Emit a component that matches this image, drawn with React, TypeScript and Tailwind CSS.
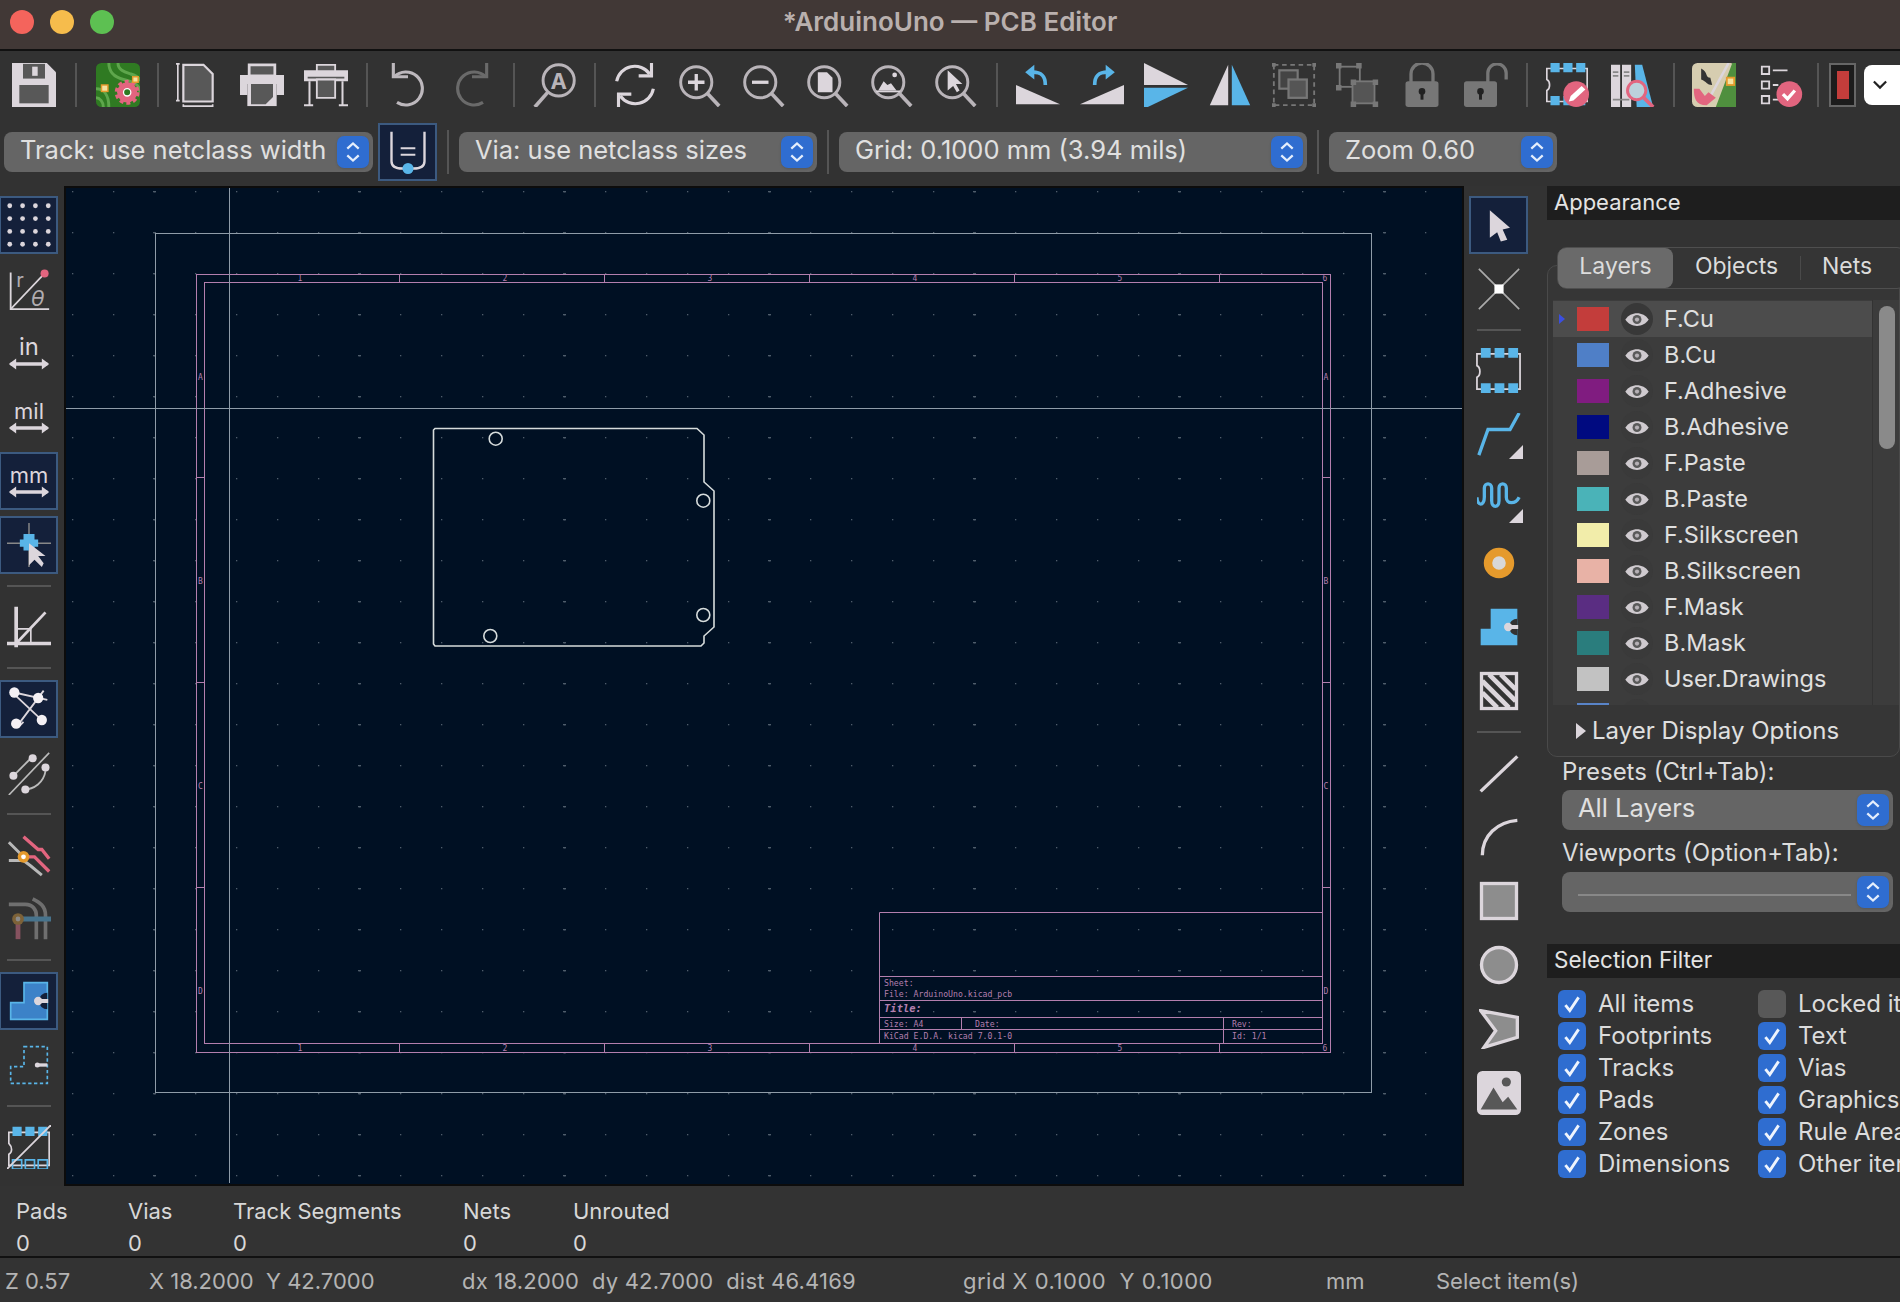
import type { ReactNode } from "react"

const LT = "#dcd6dc"
const MID = "#585858"
const BLUE = "#59b5e8"
const PINK = "#e2657f"
const ORANGE = "#e59a2c"
const SMALL = "w-[40px] h-[40px]"

const Ico = ({ children, size = "w-[44px] h-[44px]" }: { children: ReactNode; size?: string }) => (
  <svg viewBox="0 0 24 24" className={size} fill="none">{children}</svg>
)

const Glass = ({ children }: { children?: ReactNode }) => (
  <Ico>
    <circle cx="10.5" cy="10.5" r="8.5" stroke="#b9b4b9" strokeWidth="1.6" fill="#333" />
    <path d="M16.5 16.5 23 23.5" stroke="#b9b4b9" strokeWidth="2" />
    {children}
  </Ico>
)

const IconSave = () => (
  <Ico>
    <path d="M0 0h19l5 5v19H0z" fill={LT} />
    <rect x="6" y="0.5" width="12" height="8" fill={MID} />
    <rect x="11" y="2" width="3" height="5" fill={LT} />
    <rect x="4" y="12" width="16" height="10" fill={MID} />
  </Ico>
)
const IconPcb = () => (
  <Ico>
    <rect width="24" height="24" rx="3" fill="#2f7a22" />
    <path d="M7 0c0 6 4 8 8 9s9 2 9 7M12 0c0 4 4 5 7 6s5 2 5 4M0 14c4 0 7 3 7 10M0 19c2 0 4 2 4 5" stroke="#5ea64c" strokeWidth="1.6" />
    <circle cx="17" cy="16" r="5.5" fill={PINK} stroke={PINK} strokeWidth="2.6" strokeDasharray="2 1.5" />
    <circle cx="17" cy="16" r="5" fill={PINK} />
    <circle cx="17" cy="16" r="2" fill="#2f7a22" stroke="#fff" strokeWidth="0.7" />
    <rect x="3" y="12" width="3.5" height="3.5" fill="#f4e3a0" stroke={ORANGE} strokeWidth="0.8" />
    <rect x="20" y="7.5" width="3" height="3" fill="#f4e3a0" stroke={ORANGE} strokeWidth="0.8" />
  </Ico>
)
const IconPage = () => (
  <Ico>
    <path d="M4 1h11l5 5v15H4z" fill={MID} stroke={LT} strokeWidth="1.2" />
    <path d="M1 0.5v20M0 .5h2M0 20.5h2M4 23.5h16M4 22.5v2M20 22.5v2" stroke={LT} strokeWidth="0.9" />
  </Ico>
)
const IconPrint = () => (
  <Ico>
    <path d="M5 1h14v6H5z" fill={MID} stroke={LT} strokeWidth="1.5" />
    <path d="M0 6.500h24v11h-4v-6H4v6H0z" fill={LT} />
    <path d="M4 10h16v13.500H4z" fill={LT} />
    <path d="M6 11.500h12v7l-4 4H6z" fill={MID} />
  </Ico>
)
const IconPlot = () => (
  <Ico>
    <path d="M7 1h10v4H7z" fill={MID} stroke={LT} />
    <path d="M0 4h24v6H0z" fill={LT} />
    <path d="M2 8h20" stroke={MID} />
    <path d="M7 9h10v10H7z" fill={MID} stroke={LT} />
    <path d="M3 10v13M21 10v13M0 23h5M19 23h5" stroke={LT} strokeWidth="1.1" />
  </Ico>
)
const IconUndo = ({ flip, color }: { flip?: boolean; color: string }) => (
  <Ico>
    <g transform={flip ? "translate(24 0) scale(-1 1)" : undefined} stroke={color} strokeWidth="1.7">
      <path d="M4 0v7.500h8" />
      <path d="M4.500 7.500A9 9 0 1 1 6 21.500" />
    </g>
  </Ico>
)
const IconFind = () => (
  <Ico>
    <circle cx="14" cy="9.500" r="8.500" stroke="#b9b4b9" strokeWidth="1.6" />
    <path d="M8 16 1 24" stroke="#b9b4b9" strokeWidth="2" />
    <text x="14" y="14" textAnchor="middle" fontSize="12" fontWeight="700" fill="#b9b4b9" fontFamily="Inter, sans-serif">A</text>
  </Ico>
)
const IconRefresh = () => (
  <Ico>
    <g stroke={LT} strokeWidth="1.700">
      <path d="M2 10A10 10 0 0 1 20 6" />
      <path d="M22 14A10 10 0 0 1 4 18" />
      <path d="M21 0v7h-7M3 24v-7h7" />
    </g>
  </Ico>
)
const IconRotate = ({ flip }: { flip?: boolean }) => (
  <Ico>
    <g transform={flip ? "translate(24 0) scale(-1 1)" : undefined}>
      <path d="M0 12v10.500h24z" fill={LT} />
      <path d="M16 12C16 7 14 5 9 5" stroke={BLUE} strokeWidth="2" />
      <path d="M7 1v8l-5-4z" fill={BLUE} transform="translate(3 0)" />
    </g>
  </Ico>
)
const IconFlip = () => (
  <Ico>
    <path d="M0 0v12h24z" fill={LT} />
    <path d="M0 13.500h24L0 25z" fill={BLUE} />
  </Ico>
)
const IconMirror = () => (
  <Ico>
    <path d="M11 1v22H1z" fill={LT} />
    <path d="M13 1v22h10z" fill={BLUE} />
  </Ico>
)
const IconGroup = () => (
  <Ico>
    <rect x="1" y="1" width="22" height="22" stroke="#777" strokeDasharray="2.500 2" />
    <rect x="4" y="4" width="10" height="10" stroke="#777" strokeWidth="1.2" fill="#444" />
    <rect x="9" y="9" width="10" height="10" stroke="#777" strokeWidth="1.2" fill="#555" />
    <path d="M0 0h2v2H0zM22 0h2v2h-2zM0 22h2v2H0zM22 22h2v2h-2z" fill="#777" />
  </Ico>
)
const IconUngroup = () => (
  <Ico>
    <rect x="2" y="2" width="11" height="11" stroke="#777" />
    <rect x="9" y="10" width="12" height="12" stroke="#777" fill="#555" />
    <path d="M0 0h3v3H0zM11 0h3v3h-3zM0 12h3v3H0zM8 9h3v3H8zM20 9h3v3h-3zM8 21h3v3H8zM20 21h3v3h-3z" fill="#777" />
  </Ico>
)
const IconLock = ({ open }: { open?: boolean }) => (
  <Ico>
    {open ? (
      <path d="M13 11V5.500a5 5 0 0 1 10 0V9" stroke="#777" strokeWidth="1.800" />
    ) : (
      <path d="M6 11V6a6 6 0 0 1 12 0v5" stroke="#777" strokeWidth="1.800" />
    )}
    <g transform={open ? "translate(-2 0)" : undefined}>
      <rect x={open ? 2 : 2} y="10" width="18" height="14" rx="1.500" fill="#777" transform={open ? undefined : "translate(1 0)"} />
      <circle cx={open ? 11 : 12} cy="15.500" r="1.800" fill="#222" />
      <rect x={open ? 10.200 : 11.200} y="16" width="1.600" height="4" fill="#222" />
    </g>
  </Ico>
)
const FpShape = () => (
  <>
    <path d="M1 3h22v18H1v-6c2-1 2-5 0-6z" stroke={LT} strokeWidth="0.9" />
    <path d="M3 0h5v5H3zM10 0h5v5h-5zM17 0h5v5h-5zM3 18h5v5H3zM10 18h5v5h-5zM17 18h5v5h-5z" fill={BLUE} />
  </>
)
const IconFpEdit = () => (
  <Ico>
    <FpShape />
    <circle cx="17" cy="17" r="7" fill={PINK} />
    <path d="M13 21l1-3 6-5.500 2 2-6.500 6z" fill="#fff" />
  </Ico>
)
const IconLib = () => (
  <Ico>
    <path d="M0 1h5v23H0zM6 1h5v23H6z" fill={LT} />
    <path d="M13 1h4l6 23h-9z" fill={BLUE} />
    <path d="M1 5h3M1 7h3M7 5h3M7 7h3M1 20h9" stroke="#888" />
    <circle cx="14" cy="15" r="5" fill="#bcd2dc" stroke={PINK} strokeWidth="1.600" />
    <path d="M18 19l5 5" stroke={PINK} strokeWidth="2" />
  </Ico>
)
const IconScript = () => (
  <Ico>
    <rect width="24" height="24" rx="3" fill="#d6cdb0" />
    <path d="M13 24 22 0h2v24z" fill="#4f8f3e" />
    <path d="M20 0 9 20" stroke={LT} strokeWidth="1.400" />
    <path d="M5 3c4 2 2 5 5 5l1 4c-3 0-3-2-6-3z" fill="#333" />
    <rect x="19" y="8" width="4" height="4" fill="#f4e3a0" stroke={ORANGE} />
    <path d="M1 14c0 5 1 9 7 9l5-4-4-3-2 2-3-4z" fill={PINK} />
  </Ico>
)
const IconCheck = () => (
  <Ico>
    <path d="M1 2h4v4H1zM1 10h4v4H1zM1 18h4v4H1z" stroke={LT} strokeWidth="1" />
    <path d="M7 4h8M7 12h3M7 20h3" stroke={LT} strokeWidth="1" />
    <circle cx="16" cy="17" r="7" fill={PINK} />
    <path d="M12.500 17l2.500 2.500 4-4.500" stroke="#fff" strokeWidth="1.800" />
  </Ico>
)

const Sep = ({ w }: { w: string }) => (
  <div className={`${w} h-[44px] shrink-0 flex justify-center`}>
    <div className="w-[2px] h-full bg-[#555]" />
  </div>
)
const TI = ({ children, className = "" }: { children: ReactNode; className?: string }) => (
  <div className={`w-[64px] h-[44px] shrink-0 flex justify-center items-center ${className}`}>{children}</div>
)

const Stepper = () => (
  <div className="w-[32px] h-[32px] rounded-[7px] bg-[#2f6dd0] flex items-center justify-center shrink-0 shadow">
    <svg viewBox="0 0 14 20" className="w-[16px] h-[24px]" fill="none" stroke="#e4eefc" strokeWidth="2">
      <path d="M2 7l5-4.500L12 7M2 13l5 4.500L12 13" />
    </svg>
  </div>
)

const Combo = ({ label, w }: { label: string; w: string }) => (
  <div className={`${w} h-[40px] shrink-0 rounded-lg bg-[#656565] flex items-center justify-between pl-[16px] pr-[4px] text-[25.500px] text-[#e0e0e0] whitespace-nowrap`}>
    <span className="pb-[3px]">{label}</span>
    <Stepper />
  </div>
)

const Row2Sep = () => <div className="w-[2px] h-[44px] bg-[#555] shrink-0" />

const SideBtn = ({ children, active }: { children: ReactNode; active?: boolean }) => (
  <div className="h-[64px] flex items-center justify-center">
    <div className={`w-[59px] h-[58px] flex items-center justify-center ${active ? "bg-[#14203a] border-2 border-[#3c5a80]" : ""}`}>{children}</div>
  </div>
)
const SideSep = () => (
  <div className="h-[18px] flex items-center justify-center">
    <div className="w-[44px] h-[2px] bg-[#555]" />
  </div>
)

const DimIcon = ({ t, fs }: { t: string; fs: number }) => (
  <Ico>
    <text x="12" y="13" textAnchor="middle" fontSize={fs} fill={LT} fontFamily="Inter, sans-serif">{t}</text>
    <path d="M2 18h20" stroke={LT} strokeWidth="1.800" />
    <path d="M5 15 1 18l4 3zM19 15l4 3-4 3z" fill={LT} />
  </Ico>
)

const Triangle = () => (
  <svg viewBox="0 0 10 10" className="w-[14px] h-[14px] absolute right-[-2px] bottom-[-2px]">
    <path d="M10 0v10H0z" fill={LT} />
  </svg>
)

const ZoneShape = ({ fill, stroke, dash }: { fill: string; stroke: string; dash?: string }) => (
  <path d="M9 1h14v22H1V13h8z" fill={fill} stroke={stroke} strokeWidth="1" strokeDasharray={dash} />
)

const PinInZone = ({ bg }: { bg: string }) => (
  <>
    <path d="M23 7a5 5 0 0 0 0 10z" fill={bg} />
    <circle cx="17.500" cy="12" r="2.500" fill={LT} />
    <rect x="17.500" y="10.800" width="6" height="2.400" fill={LT} />
  </>
)

const LeftBar = () => (
  <div className="w-[64px] shrink-0 overflow-hidden">
    <div className="-ml-[2px] w-[61px] pt-[7px] flex flex-col items-stretch">
      <SideBtn active>
        <Ico>
          {[1.5, 8.5, 15.5, 22.5].flatMap((y) => [1.5, 8.5, 15.5, 22.5].map((x) => <circle key={`${x}-${y}`} cx={x} cy={y} r="1.300" fill={LT} />))}
        </Ico>
      </SideBtn>
      <SideBtn>
        <Ico>
          <path d="M2 3v20h21" stroke={LT} strokeWidth="1" />
          <path d="M2 23 20 4" stroke={LT} strokeWidth="0.900" />
          <circle cx="20.500" cy="3.500" r="2.200" fill={PINK} />
          <text x="5" y="11" fontSize="11" fill="#b0acb0" fontFamily="Inter, sans-serif">r</text>
          <text x="13" y="21" fontSize="12" fontStyle="italic" fill="#b0acb0" fontFamily="Inter, sans-serif">θ</text>
        </Ico>
      </SideBtn>
      <SideBtn><DimIcon t="in" fs={13} /></SideBtn>
      <SideBtn><DimIcon t="mil" fs={12} /></SideBtn>
      <SideBtn active><DimIcon t="mm" fs={12} /></SideBtn>
      <SideBtn active>
        <Ico>
          <path d="M12 0v24M0 11h24" stroke="#888" strokeWidth="0.800" />
          <path d="M9 6h6v3h2v4h-2v2H9v-2H7V9h2z" fill={BLUE} />
          <path d="M12 11v12l3-3 4 4 1-2-3-4h4z" fill={LT} />
        </Ico>
      </SideBtn>
      <SideSep />
      <SideBtn>
        <Ico>
          <path d="M5 1v22M0 21h24" stroke={LT} strokeWidth="2" />
          <path d="M5 21 21 4" stroke={LT} strokeWidth="1.500" />
          <path d="M5 13h8v8" stroke={LT} strokeWidth="0.900" />
        </Ico>
      </SideBtn>
      <SideSep />
      <SideBtn active>
        <Ico>
          <path d="M4 3 22 7M5 22 20 2M7 21l2-2M4 4l16 15" stroke={LT} strokeWidth="1" />
          <circle cx="4" cy="3" r="2.800" fill="#f4f0f4" />
          <circle cx="17" cy="6" r="2.800" fill="#f4f0f4" />
          <circle cx="5" cy="20" r="2.800" fill="#f4f0f4" />
          <circle cx="19" cy="18" r="2.800" fill="#f4f0f4" />
        </Ico>
      </SideBtn>
      <SideBtn>
        <Ico>
          <path d="M1 24 23 1" stroke="#bbb" strokeWidth="0.900" />
          <path d="M4 13 14 3" stroke="#bbb" strokeWidth="1" />
          <path d="M9 21c6 0 11-4 12-10" stroke="#bbb" strokeWidth="1" />
          <circle cx="14" cy="4" r="2.200" fill={LT} />
          <circle cx="3.500" cy="13.500" r="2.200" fill={LT} />
          <circle cx="21" cy="9" r="2.200" fill={LT} />
          <circle cx="10" cy="21" r="2.200" fill={LT} />
        </Ico>
      </SideBtn>
      <SideSep />
      <SideBtn>
        <Ico>
          <path d="M9 2 17 9h2l4 5" stroke={PINK} strokeWidth="1.800" />
          <path d="M12 13h3l8 8" stroke={PINK} strokeWidth="1.800" />
          <path d="M1 5l7 7M1 15h8l4 3 6 5" stroke="#b8b8b8" strokeWidth="1.600" />
          <circle cx="9" cy="13" r="3.200" fill={ORANGE} />
          <circle cx="9" cy="13" r="1.300" fill="#fff" />
        </Ico>
      </SideBtn>
      <SideBtn>
        <Ico>
          <path d="M1 4h9c4 0 6 3 6 6v13M14 1c4 2 7 4 7 9v13" stroke="#6f6f6f" strokeWidth="2" />
          <path d="M6 12h18" stroke="#47738c" strokeWidth="2.600" />
          <path d="M6 12v11" stroke="#86525f" strokeWidth="2.600" />
          <circle cx="6" cy="12" r="3.200" fill="#7d6238" />
          <circle cx="6" cy="12" r="1.300" fill="#8c8c8c" />
        </Ico>
      </SideBtn>
      <SideSep />
      <SideBtn active>
        <Ico size={SMALL}>
          <ZoneShape fill="#3c82c8" stroke={BLUE} />
          <PinInZone bg="#14203a" />
        </Ico>
      </SideBtn>
      <SideBtn>
        <Ico size={SMALL}>
          <ZoneShape fill="none" stroke={BLUE} dash="2 1.500" />
          <circle cx="17" cy="12" r="1.500" fill={LT} />
          <rect x="17" y="11" width="6" height="2" fill={LT} />
        </Ico>
      </SideBtn>
      <SideSep />
      <SideBtn>
        <Ico>
          <path d="M1 4h22v18H1v-6c2-1 2-4 0-6z" stroke={LT} strokeWidth="0.900" />
          <path d="M3 1h5v5H3zM10 1h5v5h-5zM17 1h5v5h-5z" fill={BLUE} />
          <path d="M3 19h5v5H3zM10 19h5v5h-5zM17 19h5v5h-5z" stroke={BLUE} strokeWidth="0.900" />
          <path d="M0 24 24 0" stroke={LT} strokeWidth="1" />
        </Ico>
      </SideBtn>
    </div>
  </div>
)

const RightBar = () => (
  <div className="w-[83px] shrink-0 pt-[8px] pl-[5px] flex flex-col items-start bg-[#333]">
    <div className="-mt-[1px]">
      <SideBtn active>
        <Ico><path d="M7 4 18 13.500 14 14.500 16.500 20 13 21 11 16 7 19z" fill={LT} /></Ico>
      </SideBtn>
    </div>
    <div className="w-[59px]">
      <SideBtn>
        <Ico>
          <path d="M1 1 23 23M23 1 1 23" stroke="#aaa" strokeWidth="0.900" />
          <rect x="9.500" y="9.500" width="5" height="5" fill="#fff" />
        </Ico>
      </SideBtn>
      <SideSep />
      <SideBtn><Ico size="w-[47px] h-[47px]"><FpShape /></Ico></SideBtn>
      <SideBtn>
        <div className="relative">
          <Ico><path d="M1 23 6 9h12l5-9" stroke={BLUE} strokeWidth="1.800" /></Ico>
          <Triangle />
        </div>
      </SideBtn>
      <SideBtn>
        <div className="relative">
          <Ico><path d="M0 11c0 5 4 5 4 0V6c0-3 4-3 4 0v7c0 4 4 4 4 0V6c0-3 4-3 4 0v5c0 4 5 4 7 0" stroke={BLUE} strokeWidth="1.800" /></Ico>
          <Triangle />
        </div>
      </SideBtn>
      <SideBtn>
        <Ico>
          <circle cx="12" cy="12" r="6" fill="#d8d8d8" stroke={ORANGE} strokeWidth="4.600" />
        </Ico>
      </SideBtn>
      <SideBtn>
        <Ico size={SMALL}>
          <path d="M7 1h16v22H1V13h6z" fill={BLUE} />
          <PinInZone bg="#333" />
        </Ico>
      </SideBtn>
      <SideBtn>
        <Ico size={SMALL}>
          <rect x="1.500" y="1.500" width="21" height="21" stroke={LT} strokeWidth="2" />
          <path d="M2 6 18 22M2 13l9 9M6 2l16 16M13 2l9 9" stroke={LT} strokeWidth="2.800" />
        </Ico>
      </SideBtn>
      <SideSep />
      <SideBtn><Ico size={SMALL}><path d="M1 23 23 2" stroke={LT} strokeWidth="2" /></Ico></SideBtn>
      <SideBtn><Ico size={SMALL}><path d="M2 23C2 11 11 3 23 2" stroke={LT} strokeWidth="2" /></Ico></SideBtn>
      <SideBtn><Ico size={SMALL}><rect x="1.500" y="1.500" width="21" height="21" fill="#8d8d8d" stroke={LT} strokeWidth="2" /></Ico></SideBtn>
      <SideBtn><Ico size={SMALL}><circle cx="12" cy="12" r="10.500" fill="#8d8d8d" stroke={LT} strokeWidth="2" /></Ico></SideBtn>
      <SideBtn><Ico size={SMALL}><path d="M1 1 23 5v12L3 23l7-10z" fill="#8d8d8d" stroke={LT} strokeWidth="2" /></Ico></SideBtn>
      <SideBtn>
        <Ico>
          <rect width="24" height="24" rx="3" fill={LT} />
          <circle cx="16" cy="6" r="2.500" fill={MID} />
          <path d="M2 21 9 9l5 8 3-3 5 7z" fill={MID} />
        </Ico>
      </SideBtn>
    </div>
  </div>
)

const Eye = ({ dark }: { dark?: boolean }) => (
  <div className={`w-[32px] h-[32px] rounded-full flex items-center justify-center shrink-0 ${dark ? "bg-[#383838]" : "bg-[#3a3a3a]"}`}>
    <svg viewBox="0 0 24 16" className="w-[26px] h-[17px]" fill="none">
      <path d="M1 8c5-8 17-8 22 0-5 8-17 8-22 0z" fill="#d0cbd0" />
      <circle cx="12" cy="8" r="4.200" fill="#5a5a5a" />
      <circle cx="12" cy="8" r="2" fill="#b5b0b5" />
    </svg>
  </div>
)

const layers = [
  ["F.Cu", "bg-[#c33d3b]"],
  ["B.Cu", "bg-[#4f7fc7]"],
  ["F.Adhesive", "bg-[#801c80]"],
  ["B.Adhesive", "bg-[#000a80]"],
  ["F.Paste", "bg-[#a89c98]"],
  ["B.Paste", "bg-[#4ab3b8]"],
  ["F.Silkscreen", "bg-[#f2edaa]"],
  ["B.Silkscreen", "bg-[#e8b2a6]"],
  ["F.Mask", "bg-[#5a2d82]"],
  ["B.Mask", "bg-[#2a7d7d]"],
  ["User.Drawings", "bg-[#c2c2c2]"],
  ["", "bg-[#5984c8]"],
]

const Check = ({ on = true }: { on?: boolean }) => (
  <div className={`w-[28px] h-[28px] rounded-[6px] flex items-center justify-center shrink-0 ${on ? "bg-[#2f6dd0]" : "bg-[#585858]"}`}>
    {on && (
      <svg viewBox="0 0 20 20" className="w-[22px] h-[22px]" fill="none" stroke="#eef4fd" strokeWidth="2.600">
        <path d="M4 11l4 5 8-12" />
      </svg>
    )}
  </div>
)

const filters: [string, boolean][] = [
  ["All items", true], ["Locked items", false],
  ["Footprints", true], ["Text", true],
  ["Tracks", true], ["Vias", true],
  ["Pads", true], ["Graphics", true],
  ["Zones", true], ["Rule Areas", true],
  ["Dimensions", true], ["Other items", true],
]

const Appearance = () => (
  <div className="flex-1 min-w-0 overflow-hidden flex flex-col bg-[#333]">
    <div className="h-[34px] shrink-0 bg-[#1e1e1e] pl-[7px] pb-[2px] flex items-center text-[22px] text-[#e4e4e4]">Appearance</div>
    <div className="relative z-10 mt-[27px] ml-[10px] h-[42px] w-[350px] shrink-0 rounded-[10px] border border-[#4f4f4f] bg-[#353535] flex items-center text-[23px] text-[#dcdcdc]">
      <div className="w-[115px] h-[40px] pb-[3px] rounded-lg bg-[#6a6a6a] flex items-center justify-center">Layers</div>
      <div className="w-[127px] pb-[3px] text-center">Objects</div>
      <div className="w-[1px] h-[24px] bg-[#4a4a4a]" />
      <div className="w-[92px] pb-[3px] text-center">Nets</div>
    </div>
    <div className="-mt-[24px] h-[492px] shrink-0 rounded-[10px] border border-[#4a4a4a] pt-[34px] pl-[5px] flex flex-col bg-[#363636]">
      <div className="h-[405px] shrink-0 flex overflow-hidden bg-[#3c3c3c]">
        <div className="w-[319px] shrink-0 pt-[1px]">
          {layers.map(([name, color], i) => (
            <div key={color} className={`h-[36px] flex items-center relative pl-[24px] ${i === 0 ? "bg-[#4c4c4c]" : ""}`}>
              {i === 0 && (
                <svg viewBox="0 0 6 10" className="w-[6px] h-[10px] absolute left-[6px] top-[13px]"><path d="M0 0l6 5-6 5z" fill="#3b4fe0" /></svg>
              )}
              <div className={`w-[32px] h-[24px] shrink-0 ${color}`} />
              <div className="ml-[12px]"><Eye dark={i === 0} /></div>
              <span className="ml-[11px] text-[23.500px] text-[#e0e0e0] whitespace-nowrap">{name}</span>
            </div>
          ))}
        </div>
        <div className="flex-1 border-l border-[#333] pl-[6px] pt-[6px]">
          <div className="w-[16px] h-[143px] rounded-full bg-[#8a8a8a]" />
        </div>
      </div>
      <div className="flex-1 flex items-center pl-[23px] text-[24px] text-[#e0e0e0]">
        <svg viewBox="0 0 10 16" className="w-[10px] h-[18px] mr-[6px]"><path d="M0 0l10 8-10 8z" fill={LT} /></svg>
        Layer Display Options
      </div>
    </div>
    <div className="pl-[15px] pr-[7px] shrink-0">
      <div className="h-[30px] flex items-center text-[24px] text-[#dcdcdc]">Presets (Ctrl+Tab):</div>
      <div className="mt-[3px] h-[40px] rounded-lg bg-[#656565] flex items-center justify-between pl-[16px] pr-[4px] text-[25.500px] text-[#e0e0e0]">
        <span className="pb-[3px]">All Layers</span>
        <Stepper />
      </div>
      <div className="h-[42px] pt-[3px] flex items-center text-[24px] text-[#dcdcdc]">Viewports (Option+Tab):</div>
      <div className="h-[40px] rounded-lg bg-[#656565] flex items-center justify-between pl-[16px] pr-[4px]">
        <div className="flex-1 h-[2px] bg-[#888] mr-[6px] mt-[6px]" />
        <Stepper />
      </div>
    </div>
    <div className="mt-[32px] h-[34px] shrink-0 bg-[#1e1e1e] pl-[7px] pb-[2px] flex items-center text-[22.500px] text-[#e4e4e4]">Selection Filter</div>
    <div className="pt-[12px] pl-[11px] grid grid-cols-[200px_200px] auto-rows-[32px] text-[24px] text-[#dcdcdc] whitespace-nowrap">
      {filters.map(([label, on]) => (
        <div key={label} className="flex items-center gap-[12px] h-[28px]">
          <Check on={on} />
          <span>{label}</span>
        </div>
      ))}
    </div>
  </div>
)

const FR = "#b37fae"
const PAGE = "#8f9ca8"
const txt = { fill: "#b37fae", fontFamily: "'DejaVu Sans Mono', monospace" }

const Canvas = () => {
  const colTicks = [399, 604, 809, 1014, 1219]
  const rowTicks = [477, 682, 887]
  const cols = [[300, "1"], [505, "2"], [710, "3"], [915, "4"], [1120, "5"], [1325, "6"]] as const
  const rows = [[380, "A"], [584, "B"], [789, "C"], [994, "D"]] as const
  return (
    <div className="w-[1400px] shrink-0 border-2 border-[#0c0c0c] bg-[#001023]">
      <svg viewBox="66 188 1396 995" className="block w-[1396px] h-[995px]" fill="none">
        <defs>
          <pattern id="dots" x="441" y="437" width="41" height="41" patternUnits="userSpaceOnUse">
            <rect width="1.300" height="1.300" fill="#4f5d6b" />
          </pattern>
          <pattern id="dots5" x="973" y="437" width="205" height="41" patternUnits="userSpaceOnUse">
            <rect width="3" height="1.300" fill="#4f5d6b" />
          </pattern>
        </defs>
        <rect x="66" y="188" width="1396" height="995" fill="url(#dots)" />
        <rect x="66" y="188" width="1396" height="995" fill="url(#dots5)" />

        <rect x="155.500" y="233.500" width="1216" height="859" stroke={PAGE} />
        <g stroke={FR}>
          <rect x="196.500" y="274.500" width="1134" height="778" />
          <rect x="204.500" y="282.500" width="1118" height="761" />
          {colTicks.map((x) => (
            <path key={x} d={`M${x + 0.5} 275V282M${x + 0.5} 1044V1052`} />
          ))}
          {rowTicks.map((y) => (
            <path key={y} d={`M197 ${y + 0.5}H204M1323 ${y + 0.5}H1330`} />
          ))}
          <path d="M879.500 1043V912.500H1322M879 976.500H1322M879 1000.500H1322M879 1017.500H1322M879 1029.500H1322M961.500 1017V1029M1223.500 1017V1043" />
        </g>
        <g {...txt} fontSize="8">
          {cols.map(([x, t]) => (
            <g key={t}>
              <text x={x} y="281" textAnchor="middle">{t}</text>
              <text x={x} y="1051" textAnchor="middle">{t}</text>
            </g>
          ))}
          {rows.map(([y, t]) => (
            <g key={t}>
              <text x="200.500" y={y} textAnchor="middle">{t}</text>
              <text x="1326" y={y} textAnchor="middle">{t}</text>
            </g>
          ))}
        </g>
        <g {...txt} fontSize="8.200">
          <text x="884" y="986">Sheet:</text>
          <text x="884" y="997">File: ArduinoUno.kicad_pcb</text>
          <text x="884" y="1012" fontSize="10.500" fontWeight="700" fontStyle="italic">Title:</text>
          <text x="884" y="1027">Size: A4</text>
          <text x="975" y="1027">Date:</text>
          <text x="1232" y="1027">Rev:</text>
          <text x="884" y="1039">KiCad E.D.A.  kicad 7.0.1-0</text>
          <text x="1232" y="1039">Id: 1/1</text>
        </g>

        <path d="M229.500 188V1183M66 408.500H1462" stroke={PAGE} />

        <g stroke="#d6dcdc" strokeWidth="1.600">
          <path d="M435 428.500H697L704 435V482L714 491V627L704 636V643L701 646H435L433.500 644V430z" />
          <circle cx="495.700" cy="438.700" r="6.500" />
          <circle cx="703.300" cy="500.700" r="6.500" />
          <circle cx="703.300" cy="615" r="6.500" />
          <circle cx="490.300" cy="636" r="6.500" />
        </g>
      </svg>
    </div>
  )
}

const Status = ({ children, w }: { children: ReactNode; w: string }) => (
  <span className={`${w} shrink-0 whitespace-pre`}>{children}</span>
)

const msgs = [
  ["Pads", "w-[112px]"],
  ["Vias", "w-[105px]"],
  ["Track Segments", "w-[230px]"],
  ["Nets", "w-[110px]"],
  ["Unrouted", "w-[120px]"],
]

export default function App() {
  return (
    <div className="w-[1900px] h-[1302px] overflow-hidden flex flex-col bg-[#323232] font-[Inter,sans-serif]">
      <div className="h-[51px] shrink-0 relative bg-[#413836] border-b-2 border-[#111] pb-[6px] flex items-center justify-center">
        <div className="absolute left-[10px] top-[10px] flex gap-[16px]">
          <div className="w-[24px] h-[24px] rounded-full bg-[#f4645c]" />
          <div className="w-[24px] h-[24px] rounded-full bg-[#f6bc4c]" />
          <div className="w-[24px] h-[24px] rounded-full bg-[#5dc052]" />
        </div>
        <span className="text-[26px] font-semibold text-[#b9b0ae]">*ArduinoUno — PCB Editor</span>
      </div>

      <div className="h-[67px] shrink-0 flex items-center pl-[2px] pt-[1px]">
        <TI><IconSave /></TI>
        <Sep w="w-[20px]" />
        <TI><IconPcb /></TI>
        <Sep w="w-[16px]" />
        <TI><IconPage /></TI>
        <TI><IconPrint /></TI>
        <TI><IconPlot /></TI>
        <Sep w="w-[18px]" />
        <TI><IconUndo color="#bdb8bd" /></TI>
        <TI><IconUndo flip color="#6a6a6a" /></TI>
        <Sep w="w-[19px]" />
        <TI><IconFind /></TI>
        <Sep w="w-[16px]" />
        <TI><IconRefresh /></TI>
        <TI><Glass><path d="M10.500 6v9M6 10.500h9" stroke={LT} strokeWidth="1.800" /></Glass></TI>
        <TI><Glass><path d="M6 10.500h9" stroke={LT} strokeWidth="1.800" /></Glass></TI>
        <TI><Glass><path d="M7 5h5l3 3v8H7z" fill={LT} /></Glass></TI>
        <TI><Glass><path d="M5 15l3-5 2 2 2-1 3 4z" fill={LT} /><circle cx="14" cy="6.500" r="1.300" fill={LT} /><path d="M4 15.500h13" stroke={LT} /></Glass></TI>
        <TI><Glass><path d="M8 4v11l3-2.500 2 3.500 1.500-1-2-3.500h3.500z" fill={LT} /></Glass></TI>
        <Sep w="w-[19px]" />
        <TI><IconRotate /></TI>
        <TI><IconRotate flip /></TI>
        <TI><IconFlip /></TI>
        <TI><IconMirror /></TI>
        <TI><IconGroup /></TI>
        <TI><IconUngroup /></TI>
        <TI><IconLock /></TI>
        <TI><IconLock open /></TI>
        <Sep w="w-[17px]" />
        <TI><IconFpEdit /></TI>
        <TI className="ml-[2px]"><IconLib /></TI>
        <Sep w="w-[17px]" />
        <TI><IconScript /></TI>
        <TI className="ml-[4px]"><IconCheck /></TI>
        <div className="w-[2px] h-[44px] bg-[#555] shrink-0 ml-[3px] mr-[10px]" />
        <div className="w-[27px] h-[44px] shrink-0 border-2 border-[#666] bg-[#1c1c1c] flex items-center justify-center">
          <div className="w-[12px] h-[28px] bg-[#c33d3b]" />
        </div>
        <div className="ml-[8px] w-[40px] h-[40px] shrink-0 rounded-l-lg bg-white flex items-center justify-center">
          <svg viewBox="0 0 16 10" className="w-[14px] h-[10px] -ml-[8px]" fill="none" stroke="#222" strokeWidth="2.500"><path d="M1 1l7 7 7-7" /></svg>
        </div>
      </div>

      <div className="h-[68px] shrink-0 flex items-center pl-[4px]">
        <Combo label="Track: use netclass width" w="w-[369px]" />
        <div className="ml-[5px] w-[59px] h-[58px] shrink-0 bg-[#14203a] border-2 border-[#3c5a80] flex items-center justify-center">
          <Ico>
            <path d="M3 1v16c0 3 3 4 6 4h6c3 0 6-1 6-4V1" stroke={LT} strokeWidth="1.300" />
            <path d="M8 10h8M8 13.500h8" stroke={LT} strokeWidth="1.100" />
            <circle cx="12" cy="21" r="3" fill={BLUE} />
          </Ico>
        </div>
        <div className="mx-[10px]"><Row2Sep /></div>
        <Combo label="Via: use netclass sizes" w="w-[358px]" />
        <div className="mx-[10px]"><Row2Sep /></div>
        <Combo label="Grid: 0.1000 mm (3.94 mils)" w="w-[468px]" />
        <div className="mx-[10px]"><Row2Sep /></div>
        <Combo label="Zoom 0.60" w="w-[228px]" />
      </div>

      <div className="flex-1 min-h-0 flex">
        <LeftBar />
        <Canvas />
        <RightBar />
        <Appearance />
      </div>

      <div className="h-[70px] shrink-0 pl-[16px] flex bg-[#333] text-[22px] leading-[32px] text-[#d8d8d8]">
        {msgs.map(([label, w]) => (
          <div key={label} className={`${w} shrink-0 flex flex-col pt-[9px]`}>
            <span>{label}</span>
            <span>0</span>
          </div>
        ))}
      </div>
      <div className="h-[46px] shrink-0 border-t-2 border-[#111] pl-[5px] pt-[2px] flex items-center bg-[#333] text-[22px] text-[#b4b4b4]">
        <Status w="w-[144px]">Z 0.57</Status>
        <Status w="w-[313px]">X 18.2000  Y 42.7000</Status>
        <Status w="w-[501px] tracking-[0.2px]">dx 18.2000  dy 42.7000  dist 46.4169</Status>
        <Status w="w-[363px] tracking-[0.5px]">grid X 0.1000  Y 0.1000</Status>
        <Status w="w-[110px]">mm</Status>
        <Status w="w-[300px]">Select item(s)</Status>
      </div>
    </div>
  )
}
